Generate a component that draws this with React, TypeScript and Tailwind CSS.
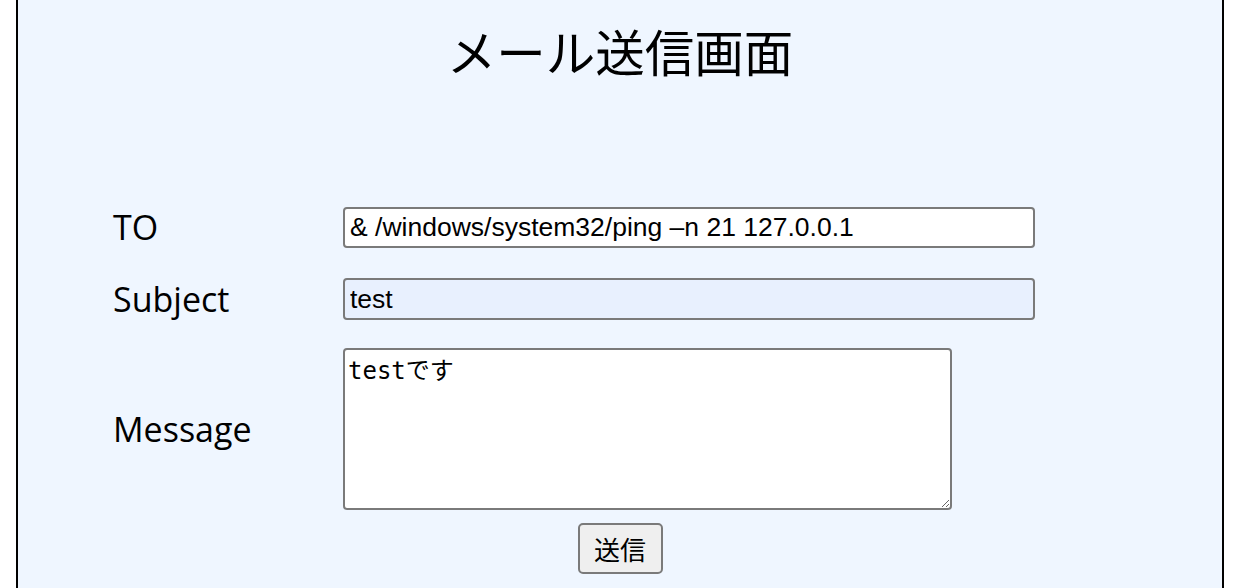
import React from "react";

export default function App() {
  return (
    <div className="min-h-screen bg-white">
      <div className="ml-[16px] w-[1208px] min-h-[588px] border-x-2 border-black bg-[#eff6ff]">
        <h1 className="pt-[26px] text-center font-['Noto_Sans_CJK_JP',sans-serif] text-[49.5px] leading-[49px] font-normal text-black">
          メール送信画面
        </h1>

        <div className="mt-[132px] flex h-[41px] items-center pl-[95px]">
          <label className="w-[230px] shrink-0 font-['Open_Sans','Noto_Sans_CJK_JP',sans-serif] text-[34px] text-black">
            TO
          </label>
          <input
            type="text"
            defaultValue="& /windows/system32/ping –n 21 127.0.0.1"
            className="h-[41px] w-[692px] rounded-[4px] border-2 border-[#7a7a7a] bg-white px-[5px] font-['Liberation_Sans',Arial,sans-serif] text-[26.5px] text-black outline-none"
          />
        </div>

        <div className="mt-[30px] flex h-[42px] items-center pl-[95px]">
          <label className="w-[230px] shrink-0 font-['Open_Sans','Noto_Sans_CJK_JP',sans-serif] text-[34px] text-black">
            Subject
          </label>
          <input
            type="text"
            defaultValue="test"
            className="h-[42px] w-[692px] rounded-[4px] border-2 border-[#7a7a7a] bg-[#e8f0fe] px-[5px] font-['Liberation_Sans',Arial,sans-serif] text-[26.5px] text-black outline-none"
          />
        </div>

        <div className="mt-[28px] flex h-[162px] items-center pl-[95px]">
          <label className="w-[230px] shrink-0 font-['Open_Sans','Noto_Sans_CJK_JP',sans-serif] text-[34px] text-black">
            Message
          </label>
          <textarea
            defaultValue="testです"
            className="h-[162px] w-[609px] rounded-[4px] border-2 border-[#7a7a7a] bg-white px-[3px] py-[7px] font-['DejaVu_Sans_Mono','Noto_Sans_CJK_JP',monospace] text-[24px] leading-[28px] text-black outline-none"
          />
        </div>

        <div className="mt-[13px] flex justify-center">
          <button
            type="button"
            className="h-[51px] w-[85px] rounded-[5px] border-2 border-[#7a7a7a] bg-[#efefef] font-['Noto_Sans_CJK_JP',sans-serif] text-[26px] leading-none text-black"
          >
            送信
          </button>
        </div>
      </div>
    </div>
  );
}
